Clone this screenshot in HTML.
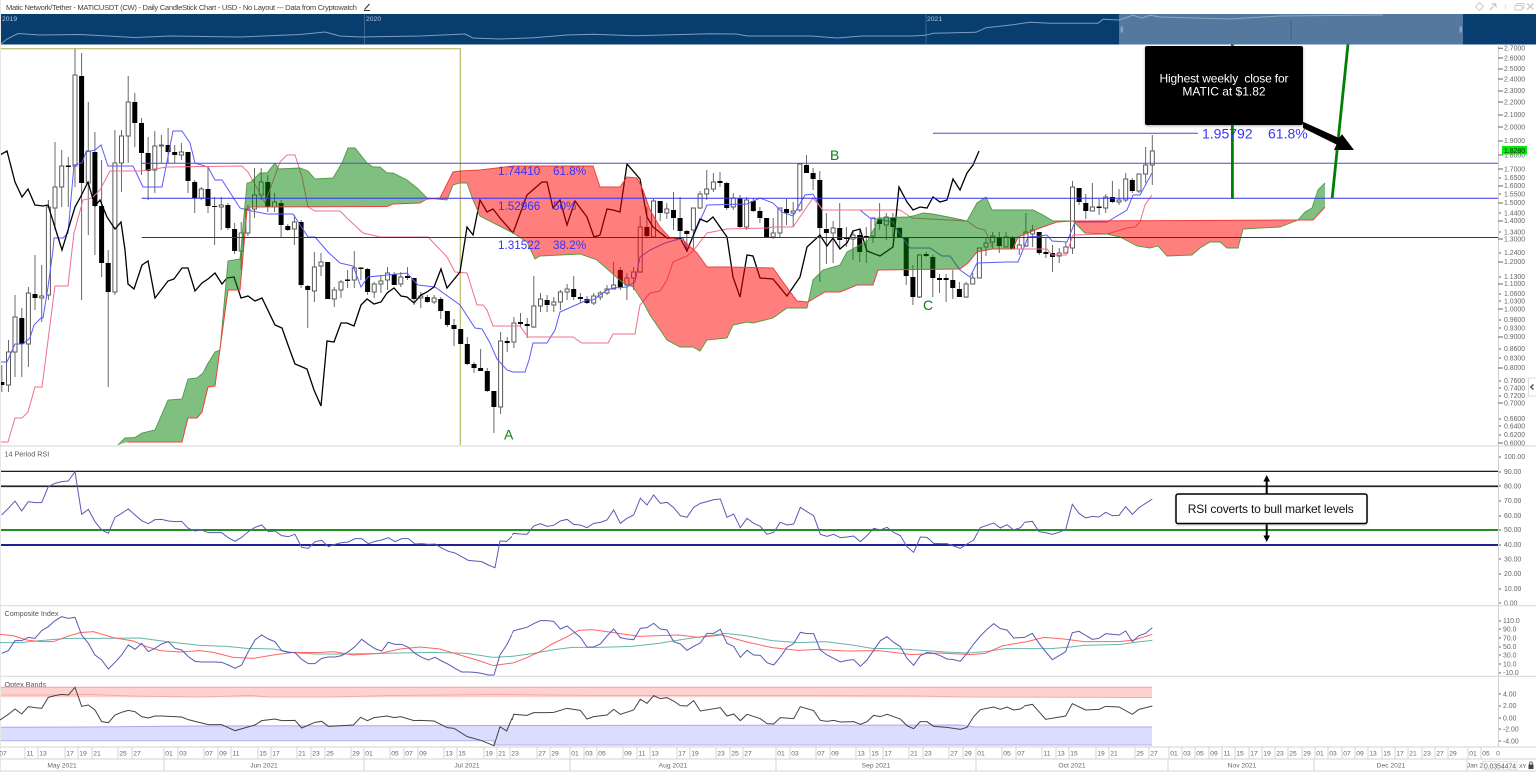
<!DOCTYPE html>
<html><head><meta charset="utf-8"><title>MATICUSDT Chart</title>
<style>
html,body{margin:0;padding:0;background:#fff;width:1536px;height:772px;overflow:hidden}
svg{display:block}
text{font-family:"Liberation Sans",sans-serif}
</style></head><body>
<svg width="1536" height="772" viewBox="0 0 1536 772" xmlns="http://www.w3.org/2000/svg">
<defs>
<clipPath id="mp"><rect x="1" y="44" width="1497" height="401"/></clipPath>
<filter id="sh" x="-10%" y="-20%" width="120%" height="150%"><feGaussianBlur stdDeviation="1.2"/></filter>
</defs>
<rect width="1536" height="772" fill="#fff"/>
<rect x="0" y="0" width="1" height="772" fill="#e8e8e8"/>

<!-- main pane -->
<g clip-path="url(#mp)" fill="none">
<path d="M1 48.7H460.3V446" stroke="#b8b86a" stroke-width="1.2"/>
<!-- wicks -->
<path stroke="#6a6a6a" stroke-width="1" d="M1.8 365V392M8.5 340V392M15 295V377M21.8 308V377M28.4 287V367M35 255V310M41.7 265V322M48.4 200V300M55 142V230M61.7 150V207M68.3 157V207M75 49V187M81.6 53V300M88.3 102V235M94.9 132V255M101.6 160V277M108.2 250V387M114.9 130V295M121.5 130V192M128.2 76V163M134.8 93V147M141.5 118V175M148.1 137V200M154.8 131V193M161.4 135V163M168.1 128V163M174.7 145V163M181.4 143V160M188 152V193M194.7 180V213M201.3 187V200M208 166V213M214.6 197V245M221.3 197V230M227.9 203V230M234.6 223V254M241.2 222V270M247.9 205V236M254.5 168V218M261.2 168V200M267.8 175V212M274.5 193V212M281.1 200V238M287.8 224V231M294.4 215V245M301.1 220V288M307.7 285V328M314.4 252V302M321 253V276M327.7 262V299M334.3 287V307M341 280V298M347.6 270V288M354.3 251V288M360.9 268V280M367.6 268V295M374.2 282V298M380.9 275V293M387.5 267V290M394.2 272V285M400.8 272V287M407.5 267V280M414.1 278V305M420.8 292V308M427.4 295V303M434.1 295V304M440.7 297V319M447.4 311V327M454 319V346M460.7 329V344M467.3 337V365M474 362V373M480.6 349V371M487.3 368V392M493.9 391V433M500.6 332V414M507.2 337V352M513.9 317V348M520.5 313V327M527.2 318V338M533.8 276V328M540.5 293V312M547.1 295V312M553.8 297V312M560.4 290V310M567.1 284V300M573.7 276V300M580.4 293V303M587 296V304M593.7 293V305M600.3 291V300M607 285V295M613.6 262V287M620.3 267V290M626.9 273V300M633.6 267V290M640.2 216V273M646.9 207V237M653.5 199V238M660.2 201V221M666.8 203V219M673.5 192V230M680.1 197V237M686.8 230V252M693.4 208V250M700.1 191V209M706.7 170V200M713.4 173V192M720 172V187M726.7 182V210M733.3 193V210M740 195V228M746.6 197V230M753.3 198V212M759.9 207V223M766.6 218V238M773.2 218V239M779.9 208V238M786.5 199V225M793.2 202V227M799.8 164V212M806.5 155V173M813.1 168V190M819.8 171V282M826.4 213V264M833.1 221V263M839.7 203V248M846.4 227V247M853 230V260M859.7 230V262M866.3 227V263M873 218V243M879.6 203V230M886.3 213V240M892.9 213V237M899.6 227V238M906.2 237V285M912.9 265V305M919.5 254V298M926.2 252V257M932.8 255V297M939.5 274V293M946.1 274V302M952.8 270V299M959.4 282V297M966.1 282V298M972.7 273V284M979.4 248V278M986 237V256M992.7 232V249M999.3 232V253M1006 232V247M1012.6 236V249M1019.3 238V255M1025.9 213V247M1032.6 225V247M1039.2 232V255M1045.9 238V258M1052.5 245V272M1059.2 248V263M1065.8 242V253M1072.5 181V254M1079.1 188V205M1085.8 194V219M1092.4 183V211M1099.1 198V215M1105.7 194V213M1112.4 181V203M1119 189V205M1125.7 173V202M1132.3 178V193M1139 174V193M1145.6 147V183M1152.3 135V185"/>
<!-- hollow bodies -->
<path fill="#fff" stroke="#5a5a5a" stroke-width="1" d="M6.5 352h4V385h-4zM13 317h4V352h-4zM26.4 293h4V344h-4zM39.7 296h4V298h-4zM46.4 207h4V295h-4zM53 187h4V208h-4zM59.7 166h4V187h-4zM73 75h4V166h-4zM86.3 151h4V183h-4zM112.9 163h4V292h-4zM119.5 136h4V163h-4zM126.2 102h4V136h-4zM152.8 146h4V170h-4zM159.4 145h4V146h-4zM179.4 152h4V155h-4zM199.3 189h4V198h-4zM219.3 205h4V207h-4zM239.2 233h4V251h-4zM245.9 209h4V233h-4zM252.5 195h4V209h-4zM259.2 182h4V195h-4zM272.5 202h4V207h-4zM292.4 222h4V229h-4zM312.4 267h4V291h-4zM319 262h4V266h-4zM332.3 290h4V299h-4zM339 282h4V290h-4zM352.3 268h4V280h-4zM372.2 284h4V292h-4zM378.9 281h4V284h-4zM385.5 273h4V280h-4zM398.8 277h4V284h-4zM418.8 296h4V298h-4zM432.1 298h4V302h-4zM498.6 341h4V407h-4zM511.9 323h4V342h-4zM531.8 306h4V327h-4zM538.5 299h4V306h-4zM551.8 302h4V305h-4zM558.4 292h4V302h-4zM565.1 289h4V292h-4zM591.7 296h4V303h-4zM598.3 293h4V297h-4zM605 289h4V293h-4zM611.6 285h4V289h-4zM624.9 278h4V285h-4zM631.6 272h4V278h-4zM638.2 227h4V272h-4zM651.5 201h4V237h-4zM664.8 209h4V213h-4zM691.4 208h4V230h-4zM698.1 194h4V208h-4zM704.7 189h4V194h-4zM711.4 182h4V189h-4zM731.3 198h4V207h-4zM744.6 200h4V227h-4zM771.2 233h4V237h-4zM777.9 208h4V233h-4zM791.2 211h4V213h-4zM797.8 164h4V210h-4zM831.1 228h4V233h-4zM851 235h4V239h-4zM871 218h4V236h-4zM884.3 217h4V225h-4zM917.5 255h4V297h-4zM964.1 284h4V297h-4zM970.7 278h4V284h-4zM977.4 248h4V278h-4zM984 243h4V247h-4zM990.7 236h4V242h-4zM1004 237h4V247h-4zM1017.3 245h4V249h-4zM1023.9 232h4V246h-4zM1030.6 230h4V234h-4zM1057.2 253h4V256h-4zM1063.8 247h4V253h-4zM1070.5 187h4V248h-4zM1090.4 207h4V211h-4zM1103.7 197h4V208h-4zM1117 200h4V202h-4zM1123.7 179h4V200h-4zM1137 174h4V191h-4zM1143.6 165h4V174h-4zM1150.3 151h4V165h-4z"/>
<!-- filled bodies -->
<path stroke="#000" stroke-width="5" d="M1.8 382V385M21.8 318V344M35 294V298M68.3 165.5V167M81.6 76V183M94.9 152V206M101.6 206V263M108.2 263V292M134.8 102V123M141.5 123V153M148.1 153V171M168.1 145V152M174.7 152V155M188 152V181M194.7 182V198M208 189V206M214.6 206V207M227.9 205V228M234.6 229V251M267.8 182V207M281.1 203V225M287.8 226V230M301.1 222V285M307.7 286V290M327.7 262V299M347.6 279.5V281M360.9 267.5V269M367.6 269V292M394.2 274V285M407.5 276V278M414.1 278V299M427.4 297V302M440.7 299V311M447.4 311V325M454 325V329M460.7 329V344M467.3 344V364M474 364V368M480.6 368V371M487.3 371V391M493.9 391V407M507.2 341V343M520.5 322V324M527.2 324V326M547.1 300V305M573.7 289V297M580.4 297V299M587 299V303M620.3 270V287M646.9 227V236M660.2 201V213M673.5 210V218M680.1 218V231M686.8 231V234M720 181V183M726.7 183V208M740 198V227M753.3 201V211M759.9 211V218M766.6 218V237M786.5 209V213M806.5 165V173M813.1 173V179M819.8 180V228M826.4 229V233M839.7 228V240M846.4 237V239M859.7 235V252M866.3 236V238M879.6 219V224M892.9 218V227M899.6 228V237M906.2 237V276M912.9 277V297M926.2 254V256M932.8 257V278M939.5 278V280M946.1 278V280M952.8 280V288M959.4 289V297M999.3 237V246M1012.6 238V249M1039.2 232V253M1045.9 252V254M1052.5 253V257M1079.1 188V202M1085.8 203V211M1099.1 206.5V208M1112.4 197V202M1132.3 180V191"/>
<!-- tenkan -->
<polyline stroke="#5a5aff" stroke-width="1" points="0,362 7,362 15,344 23,344 30,338 34,325 41,318 43,318 48,287 53,250 54,238 63,238 68,233 74,165 82,163 86,152 95,150 101,145 108,166 133,166 143,187 162,187 173,131 182,131 190,143 195,163 208,167 215,180 222,180 240,208 247,210 267,214 293,214 308,237 315,237 328,252 340,263 353,266 361,287 368,277 407,273 418,285 435,287 460,305 475,328 482,329 490,343 497,359 507,370 513,372 525,372 529,360 533,343 547,343 555,330 560,312 587,300 593,300 607,290 613,288 627,287 635,282 640,257 650,250 665,243 683,238 687,250 707,205 747,204 760,198 773,203 782,212 793,216 805,195 813,194 822,210 860,210 870,218 893,222 897,230 910,248 930,248 942,256 950,256 960,270 970,277 977,263 1007,262 1018,262 1025,245 1028,237 1040,236 1047,235 1052,241 1067,242 1075,222 1107,222 1127,210 1133,195 1140,195 1152,173"/>
<!-- kijun -->
<polyline stroke="#f0708a" stroke-width="1" points="0,442 8,442 15,418 22,418 28,412 35,387 42,387 55,286 68,286 72,250 74,233 83,200 92,198 100,190 110,171 140,171 148,170 167,167 242,166 248,172 257,188 265,203 280,162 287,155 295,155 302,177 308,207 315,211 340,211 348,219 363,233 380,237 428,237 447,257 455,272 467,273 477,305 483,305 487,310 493,326 520,326 528,337 573,337 582,343 608,343 613,334 635,334 640,305 650,293 660,291 667,280 673,262 687,256 693,251 707,233 727,229 767,228 773,227 793,227 813,198 823,210 900,210 912,218 967,221 977,228 985,230 993,249 1047,249 1052,255 1066,255 1073,235 1107,234 1127,228 1135,227 1140,222 1145,205 1152,195"/>
<!-- lagging -->
<polyline stroke="#000" stroke-width="1.3" points="0,155 7,151 15,182 22,197 28,189 35,205 43,206 48,205 62,250 68,230 75,207 80,198 88,182 95,206 100,200 107,217 115,229 121,222 125,250 128,284 134,289 142,265 148,261 155,298 168,281 174,279 182,268 188,268 195,291 202,283 208,279 215,273 222,284 227,278 234,277 241,298 248,296 255,301 262,298 275,325 282,328 288,345 295,364 307,369 314,390 321,406 327,341 334,342 341,323 347,323 354,326 361,305 367,299 374,304 381,302 387,293 394,288 401,296 407,297 414,303 421,295 427,292 434,287 441,269 447,288 460,272 467,227 473,235 480,200 487,212 493,209 500,218 513,233 527,195 542,182 547,182 553,208 560,200 567,225 575,201 587,217 594,237 600,235 607,209 613,210 620,212 627,164 640,179 647,217 653,227 667,238 680,238 687,251 700,219 707,222 713,217 727,237 733,277 740,297 747,255 753,256 760,278 773,279 787,296 800,277 807,247 820,235 827,246 833,238 840,249 847,243 853,231 860,229 867,251 880,256 893,247 899,187 907,202 913,210 920,207 927,208 933,197 940,202 947,200 953,179 960,190 967,173 973,165 979,151"/>
<!-- clouds -->
<polygon stroke="none" fill="rgba(0,128,0,.5)" points="118,445 125,438 135,437.5 142,433 155,430 168,400 182,399 188,379 197,378 203,373 207,365 215,352 220,350 228,261 240,259 247,183 250,182.7 260,173 267,173 275,163 279,169 300,168 308,171 315,179 333,178 342,163 348,148 355,148 367,163 373,167 380,167 387,173 393,173 407,180 417,188 427,198 420,203 393,204 387,206.5 250,207 247,210 240,290 228,290 215,386 208,387 202,412 197,418 188,418 182,442 127,442"/>
<polygon stroke="none" fill="rgba(255,0,0,.5)" points="427,199 440,198 453,172 460,171 480,170 513,166 593,166 600,187 620,187 627,177 637,178 643,190 650,210 660,227 670,238 683,240 697,253 707,267 727,267 773,268 783,282 797,301 808,302 807,308 787,308 773,318 753,323 747,322 733,325 727,338 707,340 700,351 693,347 680,347 667,340 650,315 643,302 633,287 623,283 597,260 580,254 540,256 535,259 527,242 513,233 480,216 473,200 467,183 460,183 453,185 447,200"/>
<polygon stroke="none" fill="rgba(0,128,0,.5)" points="807,308 813,280 823,270 840,265 847,252 860,245 868,240 875,227 878,218 907,217 913,216 923,213 933,214 953,218 967,221 977,203 986,197 992,210 1033,210 1043,215 1053,221 1073,221 1057,222 1040,228 1018,237 1013,249 992,249 977,252 968,263 960,269 878,270 873,285 857,285 840,292 825,292 808,302"/>
<polygon stroke="none" fill="rgba(255,0,0,.5)" points="1073,221 1298,220 1280,227 1260,228 1243,229 1238,248 1227,248 1220,242 1210,242 1200,248 1192,255 1167,256 1158,246 1150,248 1137,246 1120,237 1107,234 1085,233"/>
<polygon stroke="none" fill="rgba(0,128,0,.5)" points="1298,220 1305,212 1312,208 1318,190 1325,183 1325,207 1313,220"/>
<polyline stroke="#4f9a45" stroke-width=".9" points="118,445 125,438 135,437.5 142,433 155,430 168,400 182,399 188,379 197,378 203,373 207,365 215,352 220,350 228,261 240,259 247,183 250,182.7 260,173 267,173 275,163 279,169 300,168 308,171 315,179 333,178 342,163 348,148 355,148 367,163 373,167 380,167 387,173 393,173 407,180 417,188 427,198 447,200 453,185 460,183 467,183 473,200 480,216 513,233 527,242 535,259 540,256 580,254 597,260 623,283 633,287 643,302 650,315 667,340 680,347 693,347 700,351 707,340 727,338 733,325 747,322 753,323 773,318 787,308 807,308 813,280 823,270 840,265 847,252 860,245 868,240 875,227 878,218 907,217 913,216 923,213 933,214 953,218 967,221 977,203 986,197 992,210 1033,210 1043,215 1053,221 1073,221 1085,233 1107,234 1120,237 1137,246 1150,248 1158,246 1167,256 1192,255 1200,248 1210,242 1220,242 1227,248 1238,248 1243,229 1260,228 1280,227 1298,220 1305,212 1312,208 1318,190 1325,183"/>
<polyline stroke="#f04040" stroke-width="1" points="127,442 182,442 188,418 197,418 202,412 208,387 215,386 228,290 240,290 247,210 250,207 387,206.5 393,204 420,203 427,199 440,198 453,172 460,171 480,170 513,166 593,166 600,187 620,187 627,177 637,178 643,190 650,210 660,227 670,238 683,240 697,253 707,267 727,267 773,268 783,282 797,301 808,302 825,292 840,292 857,285 873,285 878,270 960,269 968,263 977,252 992,249 1013,249 1018,237 1040,228 1057,222 1073,221 1298,220 1313,220 1325,207"/>
<!-- fib lines -->
<path stroke="#4a4ae6" stroke-width="1" d="M141.7 163.3H1498"/>
<path stroke="#3434ee" stroke-width="1" d="M141.7 198.3H1498"/>
<path stroke="#2a2ab0" stroke-width="1" d="M141.7 237.5H1498"/>
<path stroke="#4a4ae6" stroke-width="1" d="M933 133.3H1198"/>
<!-- big green lines -->
<path stroke="#008000" stroke-width="2.8" d="M1232.4 44V199M1332.2 198L1348 44"/>
</g>
<g font-size="11.7" fill="#3434ff">
<text x="498" y="175">1.74410</text><text x="553" y="175">61.8%</text>
<text x="498" y="210">1.52966</text><text x="553" y="210">50%</text>
<text x="498" y="249">1.31522</text><text x="553" y="249">38.2%</text>
<text x="1202" y="138.5" font-size="14">1.95792</text><text x="1268" y="138.5" font-size="14">61.8%</text>
</g>
<g font-size="14" fill="#0a820a">
<text x="504" y="439.5">A</text><text x="830" y="160">B</text><text x="923" y="310">C</text>
</g>

<!-- arrow & callout -->
<polygon points="1303,121.7 1339,138 1342,134.3 1354,150 1334,150 1336.5,144.5 1303,128" fill="#000"/>
<rect x="1145" y="47" width="158" height="79" rx="2" fill="#555" opacity=".5" filter="url(#sh)"/>
<rect x="1145" y="46" width="158" height="79" rx="2" fill="#000"/>
<text x="1224" y="82.3" font-size="12" fill="#fff" text-anchor="middle" textLength="129">Highest weekly&#160; close for</text>
<text x="1224" y="95.7" font-size="12" fill="#fff" text-anchor="middle">MATIC at $1.82</text>

<!-- title row -->
<text x="6" y="10" font-size="7.6" fill="#444" textLength="351">Matic Network/Tether - MATICUSDT (CW) - Daily CandleStick Chart - USD - No Layout --- Data from Cryptowatch</text>
<path d="M364 10.5H370M364.5 9.5L369.5 4" stroke="#333" stroke-width="1.1" fill="none"/>
<g fill="none" stroke="#ccc" stroke-width="1">
<path d="M1479.5 2.5L1483.5 6.5L1479.5 10.5L1475.5 6.5Z"/>
<path d="M1490 10L1493 6.5M1492 3.5L1497 7M1494.5 3L1496 5" stroke-width="1.6"/>
<path d="M1505.5 4V9" stroke="#e4e4e4" stroke-width="1.4"/>
<path d="M1515 5.5H1522V10H1515ZM1517 5.5V3.5H1524V8H1522"/>
<path d="M1527 3.5L1533.5 9.5M1533.5 3.5L1527 9.5" stroke-width="1.4"/>
</g>

<!-- navigator -->
<rect x="1" y="14" width="1535" height="30.5" fill="#083d70"/>
<rect x="1119" y="14" width="344" height="30.5" fill="#54789e"/>
<path d="M364.5 14V44M926 14V44" stroke="#3c6590" stroke-width="1"/>
<path d="M1291 20V40" stroke="#3f5f80" stroke-width="1"/>
<rect x="1120.5" y="26.5" width="2.5" height="6" fill="#8ca2bb"/><rect x="1459.5" y="26.5" width="2.5" height="6" fill="#8ca2bb"/>
<polyline fill="none" stroke="#7f9dbd" stroke-width="1" points="1,44 7,39 18,33.5 40,35 80,34.5 135,37.5 170,36 240,37 300,34.5 325,32 340,36 360,37 420,36 465,34 473,38 500,39 534,37.7 567,35 593,34.3 635,35.7 710,33.7 736,34 748,36 811,36 837,38 862,36 912,36 925,35.3 933.5,33.3 976,32.3 986,27.7 1013,24.7 1030,22.3 1051,23.3 1098,23.3 1103,19.3 1119,20"/>
<polyline fill="none" stroke="#90a9c3" stroke-width="1" points="1119,20 1133,15.3 1142,18 1150,15.3 1160,17 1230,19 1280,16 1383,15"/>
<g font-size="6.8" fill="#b8c8d9"><text x="2" y="21">2019</text><text x="366" y="21">2020</text><text x="927" y="21">2021</text></g>

<!-- axis -->
<path d="M1498.5 44V747" stroke="#cfcfcf" stroke-width="1" fill="none"/>
<path fill="none" stroke="#666" stroke-width="1" d="M1498 48.3h5M1498 58h5M1498 69h5M1498 79h5M1498 91h5M1498 102h5M1498 115h5M1498 127h5M1498 141h5M1498 155h5M1498 169h5M1499 178h2M1498 186h5M1499 194h2M1498 203h5M1499 213h2M1498 221h5M1499 232h2M1498 239h5M1499 253h2M1498 262h5M1499 277h2M1498 284h5M1499 294h2M1499 301h2M1498 309h5M1499 320h2M1499 328h2M1498 337h5M1499 349h2M1499 358h2M1498 368h5M1499 381h2M1499 388h2M1499 396h2M1498 403h5M1499 419h2M1499 426h2M1499 435h2M1498 443h5M1499 457h2M1499 472h2M1499 486h2M1499 501h2M1499 516h2M1499 530h2M1499 545h2M1499 559h2M1499 574h2M1499 589h2M1499 603h2M1499 621h2M1499 629h2M1499 638h2M1499 647h2M1499 655h2M1499 664h2M1499 673h2M1499 694h2M1499 706h2M1499 718h2M1499 729h2M1499 741h2"/>
<g font-size="6.9" fill="#666" dominant-baseline="middle">
<text x="1504" y="48.5">2.7000</text><text x="1504" y="58.5">2.6000</text><text x="1504" y="69">2.5000</text><text x="1504" y="79.5">2.4000</text><text x="1504" y="91">2.3000</text><text x="1504" y="102.5">2.2000</text><text x="1504" y="115">2.1000</text><text x="1504" y="127.5">2.0000</text><text x="1504" y="141">1.9000</text><text x="1504" y="155.5">1.8000</text><text x="1504" y="169.5">1.7000</text><text x="1504" y="178">1.6500</text><text x="1504" y="186">1.6000</text><text x="1504" y="194.5">1.5500</text><text x="1504" y="203">1.5000</text><text x="1504" y="213.5">1.4400</text><text x="1504" y="221">1.4000</text><text x="1504" y="232.5">1.3400</text><text x="1504" y="239.5">1.3000</text><text x="1504" y="253">1.2400</text><text x="1504" y="262">1.2000</text><text x="1504" y="277">1.1300</text><text x="1504" y="284">1.1000</text><text x="1504" y="294">1.0600</text><text x="1504" y="301.5">1.0300</text><text x="1504" y="309.5">1.0000</text><text x="1504" y="320">0.9600</text><text x="1504" y="328.5">0.9300</text><text x="1504" y="337">0.9000</text><text x="1504" y="349">0.8600</text><text x="1504" y="358.5">0.8300</text><text x="1504" y="368">0.8000</text><text x="1504" y="381">0.7600</text><text x="1504" y="388.5">0.7400</text><text x="1504" y="396">0.7200</text><text x="1504" y="403.5">0.7000</text><text x="1504" y="419">0.6600</text><text x="1504" y="426.5">0.6400</text><text x="1504" y="435">0.6200</text><text x="1504" y="443.5">0.6000</text>
<text x="1504" y="457">100.00</text><text x="1504" y="472">90.00</text><text x="1504" y="486.5">80.00</text><text x="1504" y="501">70.00</text><text x="1504" y="516">60.00</text><text x="1504" y="530">50.00</text><text x="1504" y="545">40.00</text><text x="1504" y="559.5">30.00</text><text x="1504" y="574">20.00</text><text x="1504" y="589">10.00</text><text x="1504" y="603.5">0.00</text>
<text x="1503" y="621">110.0</text><text x="1503" y="629.5">90.0</text><text x="1503" y="638.5">70.0</text><text x="1503" y="647">50.0</text><text x="1503" y="655.5">30.0</text><text x="1503" y="664.5">10.0</text><text x="1503" y="673">-10.0</text>
<text x="1503" y="694.5">4.00</text><text x="1503" y="706">2.00</text><text x="1503" y="718.5">0.00</text><text x="1503" y="729.5">-2.00</text><text x="1503" y="741.5">-4.00</text>
</g>
<rect x="1502" y="146" width="25" height="8.5" fill="#00ee00"/>
<text x="1514.5" y="152.8" font-size="6.9" fill="#222" text-anchor="middle">1.8280</text>
<path d="M1536 378H1528.5V396H1536" fill="#fff" stroke="#ddd"/>
<path d="M1533.5 384.5L1530.8 387L1533.5 389.5" fill="none" stroke="#555" stroke-width="1.5"/>

<!-- pane dividers -->
<path d="M0 446H1536M0 605.7H1536M0 676.3H1536M0 747H1536M0 759H1536M0 771H1536" stroke="#dcdcdc" stroke-width="1.2" fill="none"/>
<g font-size="7.2" fill="#555">
<text x="4.5" y="456.5">14 Period RSI</text><text x="4.5" y="616">Composite Index</text><text x="4.5" y="687">Optex Bands</text>
</g>

<!-- RSI levels -->
<path d="M1 471.3H1498" stroke="#000" stroke-width="1.1"/>
<path d="M1 486.3H1498" stroke="#888" stroke-width="2"/><path d="M1 486.3H1498" stroke="#000" stroke-width="1"/>
<path d="M1 530H1498" stroke="#008000" stroke-width="1.7"/>
<path d="M1 545H1498" stroke="#000080" stroke-width="1.7"/>

<!-- optex bands -->
<rect x="1" y="687.3" width="1151" height="10" fill="#ffd2d2"/>
<path d="M1 687.3H1152" stroke="#f7a0a0" stroke-width="1"/>
<polyline fill="none" stroke="#f7a8a8" stroke-width="1" points="1,695 60,695 90,694.5 130,696 200,697 250,695.5 270,697 330,697 390,695.5 500,694.5 600,695.5 800,695.5 920,696 960,697 1152,697.5"/>
<polygon points="1,727.3 90,727 200,726 494,725.5 960,725 975,727 1152,727 1152,745 494,745 494,740.7 1,740.7" fill="#dcdcff"/>
<polyline fill="none" stroke="#a8a8f4" stroke-width="1" points="1,727.3 90,727 200,726 494,725.5 960,725 975,727 1152,727"/>
<polyline fill="none" stroke="#b0b0f4" stroke-width="1" points="1,740.7 494,740.7 494,745 1152,745"/>

<!-- indicators: May-Jul -->
<g transform="translate(0 445) scale(.33333)" fill="none" stroke-width="3">
<polyline stroke="#5a5ab4" points="5,210 25,190 45,168 65,198 85,170 105,173 125,173 145,125 165,115 185,110 205,108 225,80 245,208 265,193 285,230 305,255 325,265 345,217 365,205 385,192 405,210 425,227 445,236 465,224 485,223 505,228 525,230 545,229 565,250 585,258 605,255 625,263 645,263 665,263 685,278 705,289 725,277 745,260 765,247 785,240 805,260 825,258 845,272 865,275 885,268 905,307 925,310 945,290 965,286 985,305 1005,298 1025,293 1045,291 1065,281 1085,281 1105,296 1125,289 1145,285 1165,278 1185,290 1205,281 1225,281 1245,297 1265,296 1285,298 1305,297 1325,309 1345,319 1365,324 1385,335 1405,346 1425,348 1445,350 1465,360 1485,368 1500,288 1520,289 1536,274"/>
<polyline stroke="#68b4ac" points="0,593 60,593 120,587 200,580 300,580 420,579 500,590 600,601 680,604 740,610 820,612 880,623 950,627 1040,627 1200,624 1300,622 1400,625 1480,637 1536,634"/>
<polyline stroke="#ff6464" points="0,568 40,572 80,585 120,590 160,590 200,575 240,563 280,560 340,578 400,588 440,605 480,617 540,621 600,617 640,622 700,637 760,640 820,630 880,622 950,623 1000,620 1060,630 1140,625 1200,612 1260,606 1320,612 1380,630 1440,648 1480,662 1536,654"/>
<polyline stroke="#5a5ab4" points="5,625 25,617 45,587 65,587 85,577 105,580 125,557 145,545 165,527 185,515 205,520 225,517 245,570 265,595 285,630 305,645 325,672 345,652 365,630 385,600 405,613 425,595 445,620 465,610 485,597 505,590 525,610 545,615 565,635 585,649 605,651 625,651 645,651 665,652 685,660 705,670 725,660 745,620 765,585 785,570 805,582 825,590 845,617 865,622 885,623 905,643 925,656 945,656 965,640 985,636 1005,636 1025,632 1045,620 1065,605 1085,583 1105,598 1125,611 1145,618 1165,592 1185,598 1205,598 1225,607 1245,625 1265,637 1285,645 1305,637 1325,648 1345,658 1365,670 1385,681 1405,681 1425,682 1445,685 1465,690 1482,690 1500,630 1520,600 1536,568"/>
<polyline stroke="#444" points="0,825 25,808 45,792 65,807 85,785 105,788 125,790 145,757 165,752 185,748 205,750 225,727 245,784 265,780 285,795 305,830 325,833 345,810 365,802 385,796 405,800 425,815 445,819 465,813 485,813 545,816 565,824 585,829 625,839 665,839 705,857 765,840 785,827 825,822 845,827 885,826 905,849 945,832 965,829 985,844 1060,840 1082,817 1102,827 1122,818 1162,813 1182,818 1202,815 1242,827 1262,826 1302,828 1342,848 1362,850 1402,875 1442,886 1482,902 1500,845 1520,858 1536,820"/>
</g>
<!-- Jul-Oct -->
<g transform="translate(512 445) scale(.33333)" fill="none" stroke-width="3">
<polyline stroke="#5a5ab4" points="0,270 5,265 25,267 45,268 65,243 85,236 105,244 125,241 145,228 165,223 185,238 205,240 225,248 245,235 265,232 285,225 305,195 325,235 345,220 365,210 385,160 405,180 425,150 445,175 465,172 485,188 505,212 525,217 545,187 565,175 585,170 605,164 625,162 645,217 665,207 685,248 705,220 725,235 745,244 765,268 785,262 805,232 825,240 845,237 865,187 885,200 905,212 925,268 945,274 965,268 985,278 1005,276 1025,273 1045,290 1065,272 1085,250 1105,255 1125,247 1145,262 1165,272 1185,305 1205,322 1225,276 1245,277 1265,295 1285,296 1305,296 1325,303 1345,310 1365,297 1385,285 1405,248 1425,241 1445,234 1465,249 1485,239 1505,255 1525,248 1536,235"/>
<polyline stroke="#68b4ac" points="0,634 60,626 120,615 180,607 260,607 360,604 440,595 520,582 640,565 700,572 780,587 860,593 940,590 1020,600 1080,610 1150,611 1200,614 1300,621 1370,624 1420,620 1480,611 1536,611"/>
<polyline stroke="#ff6464" points="0,655 40,640 80,622 120,597 160,578 200,556 240,554 300,562 380,574 440,572 500,570 560,577 630,570 700,590 780,608 860,616 920,613 1000,618 1100,617 1200,629 1280,624 1380,629 1420,625 1470,603 1536,591"/>
<polyline stroke="#5a5ab4" points="0,565 5,557 25,552 45,547 65,536 85,527 105,527 125,529 145,552 165,543 185,560 205,577 225,606 245,606 265,597 285,573 305,552 325,578 345,582 365,584 385,550 405,548 425,535 445,552 465,555 485,590 505,597 525,616 545,604 565,594 585,565 605,565 625,553 645,595 665,604 685,637 705,616 725,630 745,631 765,653 785,660 805,636 825,607 845,596 865,562 885,566 905,566 925,615 945,630 965,640 985,651 1005,646 1025,644 1045,664 1065,645 1085,616 1105,587 1125,575 1145,592 1165,605 1185,640 1205,661 1225,632 1245,622 1265,625 1285,632 1305,642 1325,644 1345,649 1365,625 1385,597 1405,573 1425,553 1445,536 1465,551 1485,555 1505,579 1536,577"/>
<polyline stroke="#444" points="0,825 5,808 45,811 65,803 105,803 125,802 165,790 205,796 225,822 245,815 285,810 305,793 325,808 365,795 385,763 405,775 425,752 445,761 465,758 485,768 505,782 525,783 545,767 565,798 625,788 645,813 665,807 685,827 705,808 745,821 765,836 785,837 805,818 845,821 865,785 905,797 925,826 945,829 965,826 985,831 1025,830 1045,838 1065,830 1085,811 1105,815 1125,808 1165,822 1185,842 1205,851 1225,830 1245,830 1265,844 1305,847 1345,853 1365,847 1385,815 1405,794 1445,786 1465,793 1485,786 1505,795 1525,792 1536,785"/>
</g>
<!-- Oct -->
<g transform="translate(1024 445) scale(.33333)" fill="none" stroke-width="3">
<polyline stroke="#5a5ab4" points="0,232 25,229 45,260 65,263 85,268 105,262 125,253 145,178 165,205 185,219 205,214 225,216 245,202 265,212 285,211 305,185 325,208 345,188 365,175 385,162"/>
<polyline stroke="#68b4ac" points="0,611 80,611 140,606 180,601 290,598 340,591 385,586"/>
<polyline stroke="#ff6464" points="0,592 60,577 120,582 180,590 285,590 330,585 385,568"/>
<polyline stroke="#5a5ab4" points="0,578 25,565 45,595 65,620 85,644 125,620 145,563 165,559 205,583 225,580 245,566 285,570 305,558 325,590 345,572 365,565 385,548"/>
<polyline stroke="#444" points="0,783 25,778 45,800 65,823 125,813 145,776 185,795 225,793 245,784 285,786 325,808 345,793 385,783"/>
</g>

<!-- RSI callout -->
<path d="M1266.7 480V494M1266.7 523V537" stroke="#000" stroke-width="2"/>
<polygon points="1266.7,475 1263.4,481.5 1270,481.5" fill="#000"/>
<polygon points="1266.7,542 1263.4,535.5 1270,535.5" fill="#000"/>
<rect x="1176" y="495" width="191" height="30" rx="2" fill="#777" opacity=".5" filter="url(#sh)"/>
<rect x="1176" y="494" width="191" height="29.5" rx="2" fill="#fff" stroke="#000" stroke-width="1.5"/>
<text x="1270.7" y="513" font-size="12" fill="#111" text-anchor="middle" textLength="166">RSI coverts to bull market levels</text>

<!-- date axis -->
<path stroke="#d4d4d4" stroke-width="1" fill="none" d="M25 747v12M38 747v12M65 747v12M78 747v12M92 747v12M118 747v12M132 747v12M164 747v12M178 747v12M204 747v12M218 747v12M231 747v12M258 747v12M271 747v12M297 747v12M311 747v12M325 747v12M351 747v12M364 747v12M390 747v12M404 747v12M418 747v12M444 747v12M457 747v12M484 747v12M497 747v12M510 747v12M537 747v12M550 747v12M570 747v12M584 747v12M597 747v12M623 747v12M637 747v12M650 747v12M677 747v12M690 747v12M716 747v12M730 747v12M743 747v12M776 747v12M790 747v12M816 747v12M830 747v12M856 747v12M870 747v12M883 747v12M909 747v12M923 747v12M949 747v12M963 747v12M976 747v12M1002 747v12M1016 747v12M1042 747v12M1056 747v12M1069 747v12M1096 747v12M1109 747v12M1135 747v12M1149 747v12M1169 747v12M1182 747v12M1195 747v12M1209 747v12M1222 747v12M1235 747v12M1249 747v12M1262 747v12M1275 747v12M1288 747v12M1302 747v12M1315 747v12M1328 747v12M1342 747v12M1355 747v12M1368 747v12M1382 747v12M1395 747v12M1408 747v12M1422 747v12M1435 747v12M1448 747v12M1468 747v12M1481 747v12M164 759v12M364 759v12M570 759v12M776 759v12M976 759v12M1168 759v12M1314 759v12M1467 759v12"/>
<g font-size="6.7" fill="#666" text-anchor="middle">
<text x="3" y="755.5">07</text><text x="30" y="755.5">11</text><text x="43" y="755.5">13</text><text x="70" y="755.5">17</text><text x="83" y="755.5">19</text><text x="97" y="755.5">21</text><text x="123" y="755.5">25</text><text x="137" y="755.5">27</text><text x="169" y="755.5">01</text><text x="183" y="755.5">03</text><text x="209" y="755.5">07</text><text x="223" y="755.5">09</text><text x="236" y="755.5">11</text><text x="263" y="755.5">15</text><text x="276" y="755.5">17</text><text x="302" y="755.5">21</text><text x="316" y="755.5">23</text><text x="330" y="755.5">25</text><text x="356" y="755.5">29</text><text x="369" y="755.5">01</text><text x="395" y="755.5">05</text><text x="409" y="755.5">07</text><text x="423" y="755.5">09</text><text x="449" y="755.5">13</text><text x="462" y="755.5">15</text><text x="489" y="755.5">19</text><text x="502" y="755.5">21</text><text x="515" y="755.5">23</text><text x="542" y="755.5">27</text><text x="555" y="755.5">29</text><text x="575" y="755.5">01</text><text x="589" y="755.5">03</text><text x="602" y="755.5">05</text><text x="628" y="755.5">09</text><text x="642" y="755.5">11</text><text x="655" y="755.5">13</text><text x="682" y="755.5">17</text><text x="695" y="755.5">19</text><text x="721" y="755.5">23</text><text x="735" y="755.5">25</text><text x="748" y="755.5">27</text><text x="781" y="755.5">01</text><text x="795" y="755.5">03</text><text x="821" y="755.5">07</text><text x="835" y="755.5">09</text><text x="861" y="755.5">13</text><text x="875" y="755.5">15</text><text x="888" y="755.5">17</text><text x="914" y="755.5">21</text><text x="928" y="755.5">23</text><text x="954" y="755.5">27</text><text x="968" y="755.5">29</text><text x="981" y="755.5">01</text><text x="1007" y="755.5">05</text><text x="1021" y="755.5">07</text><text x="1047" y="755.5">11</text><text x="1061" y="755.5">13</text><text x="1074" y="755.5">15</text><text x="1101" y="755.5">19</text><text x="1114" y="755.5">21</text><text x="1140" y="755.5">25</text><text x="1154" y="755.5">27</text><text x="1174" y="755.5">01</text><text x="1187" y="755.5">03</text><text x="1200" y="755.5">05</text><text x="1214" y="755.5">09</text><text x="1227" y="755.5">11</text><text x="1240" y="755.5">15</text><text x="1254" y="755.5">17</text><text x="1267" y="755.5">19</text><text x="1280" y="755.5">23</text><text x="1293" y="755.5">25</text><text x="1307" y="755.5">29</text><text x="1320" y="755.5">01</text><text x="1333" y="755.5">03</text><text x="1347" y="755.5">07</text><text x="1360" y="755.5">09</text><text x="1373" y="755.5">13</text><text x="1387" y="755.5">15</text><text x="1400" y="755.5">17</text><text x="1413" y="755.5">21</text><text x="1427" y="755.5">23</text><text x="1440" y="755.5">27</text><text x="1453" y="755.5">29</text><text x="1473" y="755.5">01</text><text x="1486" y="755.5">05</text><text x="1498" y="755.5">0</text>
<text x="62" y="767.5">May 2021</text><text x="264" y="767.5">Jun 2021</text><text x="467" y="767.5">Jul 2021</text><text x="673" y="767.5">Aug 2021</text><text x="876" y="767.5">Sep 2021</text><text x="1072" y="767.5">Oct 2021</text><text x="1242" y="767.5">Nov 2021</text><text x="1391" y="767.5">Dec 2021</text><text x="1475" y="767.5">Jan 2</text>
</g>
<rect x="1483" y="761.5" width="51" height="8.5" fill="#fff"/>
<rect x="1483" y="761.5" width="34" height="8" fill="#fff" stroke="#ddd" stroke-width=".8"/>
<text x="1484" y="768.3" font-size="7" fill="#555" textLength="32" lengthAdjust="spacingAndGlyphs">0.0354474</text>
<text x="1519" y="768" font-size="5.5" fill="#555">XY</text>
<rect x="1528.5" y="764.5" width="5" height="4.5" fill="#444"/>
<path d="M1529.7 764.5V763C1529.7 761.6 1532.3 761.6 1532.3 763V764.5" fill="none" stroke="#444" stroke-width=".8"/>
</svg>
</body></html>
